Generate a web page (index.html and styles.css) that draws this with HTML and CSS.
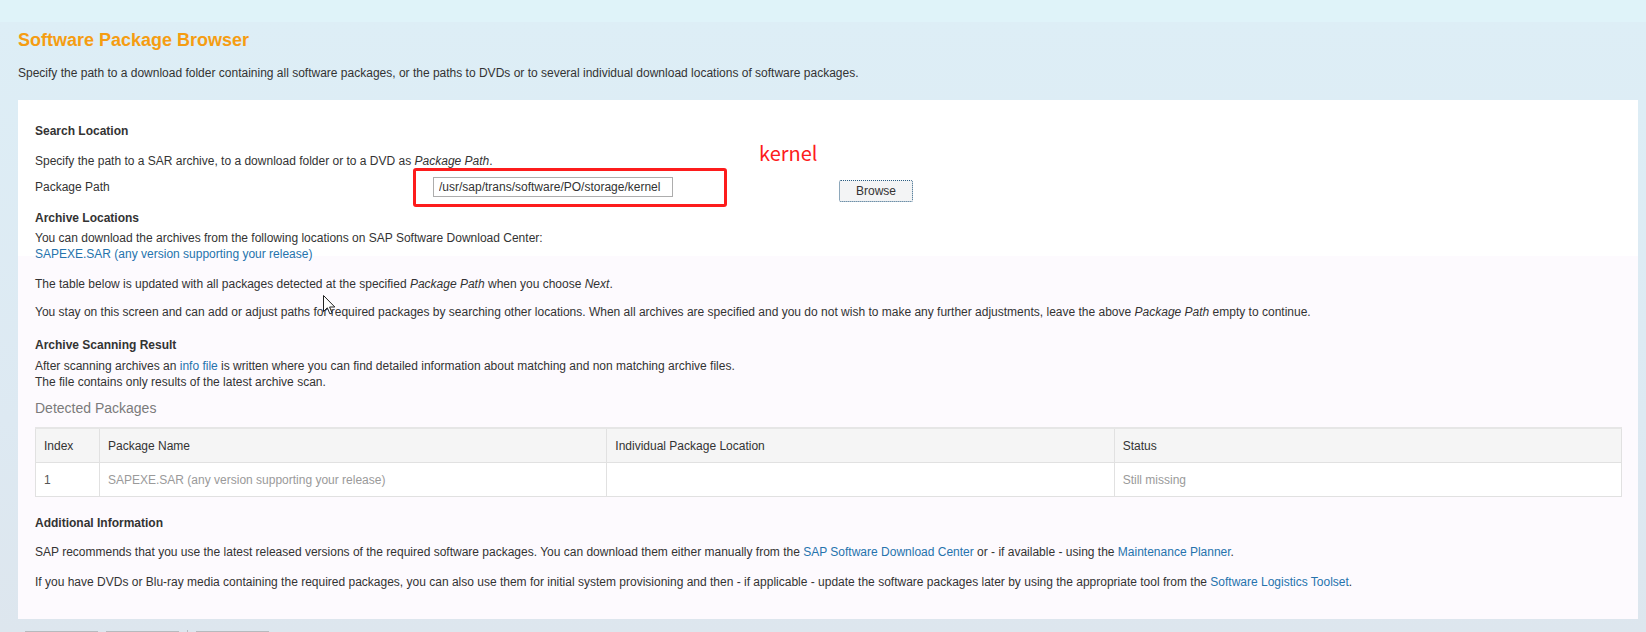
FILE: index.html
```html
<!DOCTYPE html>
<html lang="en">
<head>
<meta charset="utf-8">
<title>Software Package Browser</title>
<link rel="stylesheet" href="styles.css">
</head>
<body>
<div class="topband"></div>
<header class="page-head">
  <h1 class="title">Software Package Browser</h1>
  <p class="subtitle">Specify the path to a download folder containing all software packages, or the paths to DVDs or to several individual download locations of software packages.</p>
</header>
<main class="card">
  <h2 class="sec-title first">Search Location</h2>
  <p class="txt gap14">Specify the path to a SAR archive, to a download folder or to a DVD as <i>Package Path</i>.</p>
  <div class="form-row">
    <label class="form-label" for="pp">Package Path</label>
    <div class="form-field"><input id="pp" class="path-input" type="text" value="/usr/sap/trans/software/PO/storage/kernel"></div>
    <div class="form-btn"><button class="browse-btn" type="button">Browse</button></div>
  </div>
  <h2 class="sec-title gap8">Archive Locations</h2>
  <p class="txt gap4">You can download the archives from the following locations on SAP Software Download Center:</p>
  <p class="txt"><a class="lnk" href="#">SAPEXE.SAR (any version supporting your release)</a></p>
  <p class="txt gap14">The table below is updated with all packages detected at the specified <i>Package Path</i> when you choose <i>Next</i>.</p>
  <p class="txt gap12">You stay on this screen and can add or adjust paths for required packages by searching other locations. When all archives are specified and you do not wish to make any further adjustments, leave the above <i>Package Path</i> empty to continue.</p>
  <h2 class="sec-title gap17">Archive Scanning Result</h2>
  <p class="txt gap5">After scanning archives an <a class="lnk" href="#">info file</a> is written where you can find detailed information about matching and non matching archive files.</p>
  <p class="txt">The file contains only results of the latest archive scan.</p>
  <h3 class="detected">Detected Packages</h3>
  <table class="pkg-table">
    <colgroup>
      <col class="c-idx"><col><col><col>
    </colgroup>
    <thead>
      <tr><th>Index</th><th>Package Name</th><th>Individual Package Location</th><th>Status</th></tr>
    </thead>
    <tbody>
      <tr><td class="idx">1</td><td class="muted">SAPEXE.SAR (any version supporting your release)</td><td></td><td class="muted">Still missing</td></tr>
    </tbody>
  </table>
  <h2 class="sec-title gap18">Additional Information</h2>
  <p class="txt gap13">SAP recommends that you use the latest released versions of the required software packages. You can download them either manually from the <a class="lnk" href="#">SAP Software Download Center</a> or - if available - using the <a class="lnk" href="#">Maintenance Planner</a>.</p>
  <p class="txt gap14">If you have DVDs or Blu-ray media containing the required packages, you can also use them for initial system provisioning and then - if applicable - update the software packages later by using the appropriate tool from the <a class="lnk" href="#">Software Logistics Toolset</a>.</p>

  <div class="annot-box"></div>
  <div class="annot-text">kernel</div>
  <svg class="cursor" width="13" height="20" viewBox="0 0 13 20" aria-hidden="true">
    <path d="M0.5 0.5 L0.5 16.5 L4.3 12.8 L6.9 18.9 L9.1 18 L6.6 12 L11.8 12 Z" fill="#fff" stroke="#222" stroke-width="1" stroke-linejoin="round"/>
  </svg>
</main>
<footer class="footer">
  <span class="fbtn"></span>
  <span class="fbtn"></span>
  <span class="fsep"></span>
  <span class="fbtn"></span>
</footer>
</body>
</html>
```
FILE: styles.css
```css
html, body {
  margin: 0;
  padding: 0;
  height: 632px;
  overflow: hidden;
}
body {
  font-family: "Liberation Sans", Arial, sans-serif;
  font-size: 12px;
  line-height: 16px;
  color: #333;
  background: linear-gradient(to bottom, #dff3f9 0, #dff3f9 22px, #ddeef6 22px, #dde9f2 420px, #dde6ee 632px);
}
.topband {
  height: 22px;
}
.page-head {
  padding: 0 18px;
}
.title {
  margin: 7px 0 0;
  font-size: 18px;
  line-height: 22px;
  font-weight: bold;
  color: #f59d12;
}
.subtitle {
  margin: 14px 0 0;
  font-size: 12px;
  line-height: 16px;
}
.card {
  position: relative;
  margin: 19px 8px 0 18px;
  padding: 23px 16px 29px 17px;
  background: linear-gradient(to bottom, #ffffff 0, #ffffff 156px, #fdfafe 156px, #fdfafe 100%);
}
.sec-title {
  margin: 0;
  font-size: 12px;
  line-height: 16px;
  font-weight: bold;
  color: #333;
}
.txt {
  margin: 0;
}
.gap4 { margin-top: 4px; }
.gap5 { margin-top: 5px; }
.gap8 { margin-top: 8px; }
.gap12 { margin-top: 12px; }
.gap13 { margin-top: 13px; }
.gap14 { margin-top: 14px; }
.gap17 { margin-top: 17px; }
.gap18 { margin-top: 18px; }
.lnk {
  color: #2673ad;
  text-decoration: none;
}
.form-row {
  display: grid;
  grid-template-columns: 398px 406px auto;
  align-items: start;
  margin-top: 8px;
}
.form-label {
  line-height: 20px;
}
.path-input {
  box-sizing: border-box;
  display: block;
  width: 240px;
  height: 20px;
  margin: 0;
  padding: 0 5px;
  border: 1px solid #adadad;
  background: #fff;
  font-family: "Liberation Sans", Arial, sans-serif;
  font-size: 12px;
  color: #333;
}
.browse-btn {
  box-sizing: border-box;
  display: block;
  width: 74px;
  height: 22px;
  margin: 3px 0 0;
  padding: 0;
  border: 1px dotted #2b5d82;
  border-radius: 2px;
  background: #f3f4f5;
  font-family: "Liberation Sans", Arial, sans-serif;
  font-size: 12px;
  color: #333;
}
.detected {
  margin: 9px 0 0;
  font-size: 14px;
  line-height: 18px;
  font-weight: normal;
  color: #7b7b7b;
}
.pkg-table {
  width: 100%;
  margin-top: 10px;
  border-collapse: collapse;
  table-layout: fixed;
  border: 1px solid #e1e1e1;
  border-top: 2px solid #e6e6e6;
}
.c-idx {
  width: 64px;
}
.pkg-table th,
.pkg-table td {
  padding: 0 8px;
  text-align: left;
  font-weight: normal;
  border: 1px solid #e1e1e1;
}
.pkg-table th {
  height: 33px;
  background: #f5f5f5;
  color: #333;
}
.pkg-table td {
  height: 33px;
  background: #fff;
}
.pkg-table .idx {
  color: #555;
}
.pkg-table .muted {
  color: #9a9a9a;
}
.annot-box {
  position: absolute;
  left: 395px;
  top: 68px;
  width: 314px;
  height: 39px;
  box-sizing: border-box;
  border: 3px solid #fd1c1c;
  border-radius: 3px;
}
.annot-text {
  position: absolute;
  left: 741px;
  top: 41px;
  font-family: "Noto Sans CJK SC", "Noto Sans", sans-serif;
  font-size: 20px;
  line-height: 24px;
  color: #fd1c1c;
}
.cursor {
  position: absolute;
  left: 305px;
  top: 195px;
}
.footer {
  display: flex;
  align-items: flex-start;
  gap: 8px;
  height: 14px;
  overflow: hidden;
  padding-left: 25px;
}
.fbtn {
  box-sizing: border-box;
  width: 73px;
  height: 24px;
  margin-top: 12px;
  border: 1px solid #b6babe;
  border-bottom: 0;
  background: #e9ecef;
}
.fsep {
  width: 1px;
  height: 10px;
  margin-top: 11px;
  background: #b6babe;
}
```
